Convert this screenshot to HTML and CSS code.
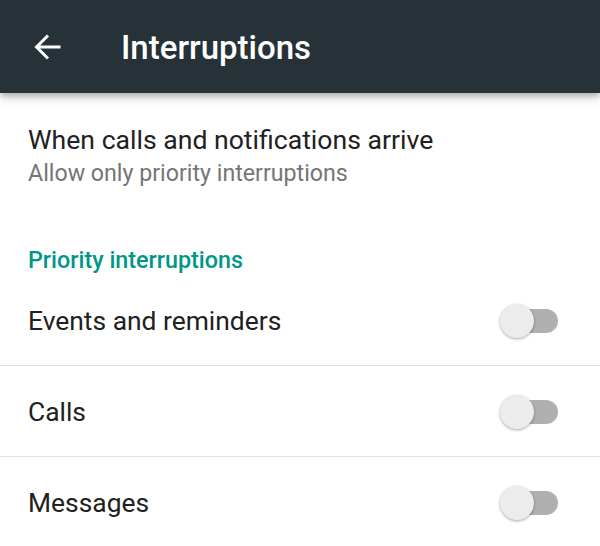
FILE: index.html
```html
<!DOCTYPE html>
<html>
<head>
<meta charset="utf-8">
<link rel="stylesheet" href="styles.css">
</head>
<body>
<header class="appbar">
  <svg class="back" width="28" height="28" viewBox="0 0 28 28">
    <path d="M26.5 14H3M14 2.5L2.5 14L14 25.5" fill="none" stroke="#fff" stroke-width="3" stroke-linecap="butt"/>
  </svg>
  <h1 class="title">Interruptions</h1>
</header>
<main class="content">
  <section class="pref-two">
    <div class="pref-title">When calls and notifications arrive</div>
    <div class="pref-summary">Allow only priority interruptions</div>
  </section>
  <div class="category">Priority interruptions</div>
  <div class="row">
    <span class="row-label">Events and reminders</span>
    <span class="switch"><span class="track"></span><span class="thumb"></span></span>
  </div>
  <div class="row">
    <span class="row-label">Calls</span>
    <span class="switch"><span class="track"></span><span class="thumb"></span></span>
  </div>
  <div class="row">
    <span class="row-label">Messages</span>
    <span class="switch"><span class="track"></span><span class="thumb"></span></span>
  </div>
</main>
</body>
</html>
```
FILE: styles.css
```css
* { box-sizing: border-box; }
html, body { margin: 0; padding: 0; background: #fff; }
body {
  width: 600px;
  height: 546px;
  overflow: hidden;
  font-family: Roboto, "Noto Sans", sans-serif;
  color: #212121;
}
.appbar {
  position: relative;
  z-index: 2;
  height: 93px;
  background: #263238;
  display: flex;
  align-items: center;
  padding-left: 34px;
  box-shadow: 0 3px 6px rgba(0,0,0,0.25), 0 6px 12px rgba(0,0,0,0.1);
}
.back { display: block; flex: none; }
.title {
  margin: 0 0 0 59px;
  font-size: 33px;
  font-weight: 500;
  color: #fff;
  line-height: 1;
  padding-top: 1px;
}
.content { padding: 0; }
.pref-two { padding: 29px 28px 0 28px; }
.pref-title { font-size: 26.6px; line-height: 36px; color: #212121; }
.pref-summary { font-size: 23.2px; line-height: 31px; color: #757575; }
.category {
  padding: 56px 28px 0 28px;
  font-size: 23.3px;
  font-weight: 500;
  line-height: 30px;
  color: #009688;
}
.row {
  height: 91px;
  display: flex;
  align-items: center;
  justify-content: space-between;
  padding: 2px 42px 0 28px;
  border-bottom: 1px solid #e0e0e0;
}
.row-label { font-size: 26.4px; color: #212121; }
.switch {
  position: relative;
  width: 58px;
  height: 36px;
  flex: none;
}
.track {
  position: absolute;
  left: 4px;
  top: 6px;
  width: 54px;
  height: 24px;
  border-radius: 12px;
  background: #b0b0b0;
}
.thumb {
  position: absolute;
  left: 0;
  top: 1px;
  width: 34px;
  height: 34px;
  border-radius: 50%;
  background: #ececec;
  box-shadow: 0 1px 3px rgba(0,0,0,0.35);
}
```
